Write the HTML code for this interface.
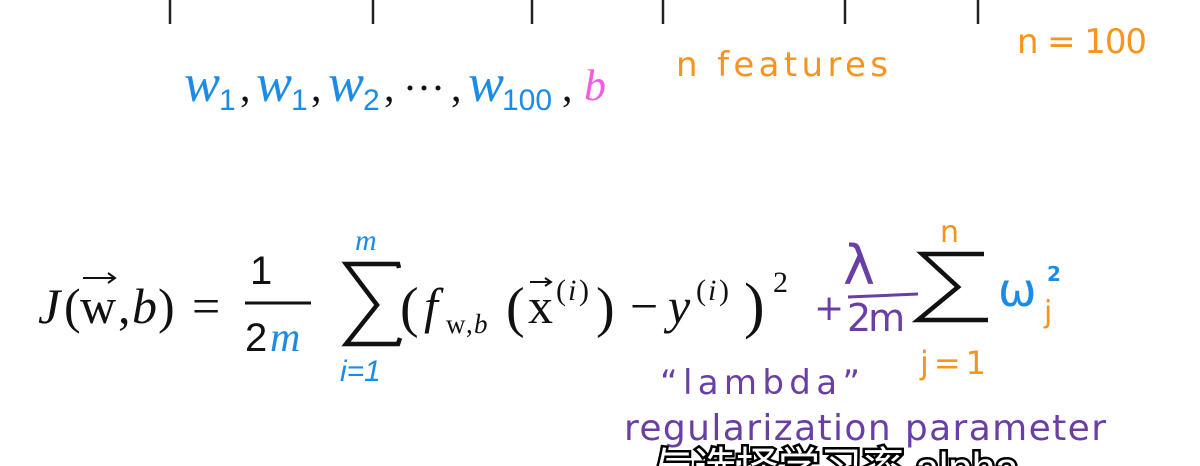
<!DOCTYPE html>
<html><head><meta charset="utf-8"><style>
html,body{margin:0;padding:0;background:#fff;width:1200px;height:466px;overflow:hidden}
svg{display:block}
.s{font-family:"Liberation Serif",serif}
.h{font-family:"DejaVu Sans","Liberation Sans",sans-serif}
</style></head><body>
<svg width="1200" height="466" viewBox="0 0 1200 466" xmlns="http://www.w3.org/2000/svg">
<g stroke="#222" stroke-width="2.5">
<line x1="170" y1="0" x2="170" y2="24"/><line x1="373" y1="0" x2="373" y2="24"/>
<line x1="532" y1="0" x2="532" y2="24"/><line x1="663" y1="0" x2="663" y2="24"/>
<line x1="845" y1="0" x2="845" y2="24"/><line x1="978" y1="0" x2="978" y2="24"/>
</g>
<g class="s" font-size="54" font-style="italic" fill="#1a8ce8">
<text x="184" y="101">w</text><text x="256" y="101">w</text><text x="328" y="101">w</text><text x="468" y="101">w</text>
</g>
<g font-family="Liberation Sans,sans-serif" font-size="30" fill="#1a8ce8">
<text x="219" y="110">1</text><text x="291" y="110">1</text><text x="363" y="110">2</text><text x="502" y="110">100</text>
</g>
<g class="s" font-size="42" fill="#111">
<text x="240" y="101">,</text><text x="311" y="101">,</text><text x="384" y="101">,</text><text x="451" y="101">,</text><text x="562" y="101">,</text>
</g>
<g fill="#111"><circle cx="410" cy="88" r="2.5"/><circle cx="424" cy="88" r="2.5"/><circle cx="438" cy="88" r="2.5"/></g>
<text x="584" y="100" class="s" font-size="44" font-style="italic" fill="#f25ce0">b</text>
<g class="h" fill="#f7941d" font-size="34">
<text x="676" y="76" textLength="212">n features</text>
<text x="1017" y="53" textLength="130">n = 100</text>
</g>
<g class="s" fill="#111" font-size="50">
<text x="38" y="323" font-style="italic">J</text>
<text x="64" y="323">(</text>
<text x="80" y="323">w</text>
<text x="118" y="323">,</text>
<text x="132" y="323" font-style="italic">b</text>
<text x="158" y="323">)</text>
<text x="192" y="323">=</text>
<text x="400" y="326" font-size="56">(</text>
<text x="424" y="323" font-style="italic">f</text>
<text x="506" y="326" font-size="56">(</text>
<text x="528" y="323">x</text>
<text x="596" y="326" font-size="56">)</text>
<text x="630" y="323">−</text>
<text x="668" y="323" font-style="italic">y</text>
<text x="744" y="326" font-size="62">)</text>
</g>
<path d="M83 278 H114 M108 273 L115 278 L108 283" stroke="#111" stroke-width="2" fill="none"/>
<path d="M530 282 H550 M545 278 L551 282 L545 286" stroke="#111" stroke-width="2" fill="none"/>
<text x="250" y="284" font-family="Liberation Sans,sans-serif" font-size="40" fill="#111">1</text>
<line x1="245" y1="303" x2="311" y2="303" stroke="#111" stroke-width="3"/>
<text x="245" y="351" font-family="Liberation Sans,sans-serif" font-size="40" fill="#111">2</text>
<text x="270" y="351" class="s" font-size="42" font-style="italic" fill="#1a8ce8">m</text>
<path d="M399 268 L398 264 H346 L377 305 L346 344 H398 L400 338" stroke="#111" stroke-width="4.5" fill="none"/>
<text x="355" y="250" class="s" font-size="30" font-style="italic" fill="#1a8ce8">m</text>
<text x="340" y="381" font-family="Liberation Sans,sans-serif" font-size="30" font-style="italic" fill="#1a8ce8">i=1</text>
<g class="s" fill="#111">
<text x="446" y="333" font-size="27">w</text><text x="466" y="333" font-size="27">,</text><text x="474" y="333" font-size="27" font-style="italic">b</text>
<text x="556" y="300" font-size="30">(</text><text x="568" y="300" font-size="30" font-style="italic">i</text><text x="579" y="300" font-size="30">)</text>
<text x="696" y="300" font-size="30">(</text><text x="708" y="300" font-size="30" font-style="italic">i</text><text x="719" y="300" font-size="30">)</text>
<text x="773" y="292" font-size="30">2</text>
</g>
<g fill="#6a3fa5" class="h">
<text x="814" y="320" font-size="36">+</text>
<text x="843" y="284" font-size="54">λ</text>
<text x="847" y="331" font-size="38" letter-spacing="-3">2m</text>
<text x="660" y="394" font-size="34" textLength="200">“lambda”</text>
<text x="624" y="440" font-size="36" textLength="482">regularization parameter</text>
</g>
<line x1="848" y1="297" x2="918" y2="294" stroke="#6a3fa5" stroke-width="3"/>
<path d="M984 254 H922 L958 287 L918 320 H988" stroke="#111" stroke-width="4.5" fill="none"/>
<g class="h" fill="#f7941d">
<text x="940" y="242" font-size="30">n</text>
<text x="1044" y="322" font-size="30">j</text>
<text x="920" y="374" font-size="32" textLength="66">j=1</text>
</g>
<text x="998" y="306" class="h" font-size="46" fill="#1a8ce8">ω</text>
<text x="1047" y="281" class="h" font-size="20" font-weight="bold" fill="#1a8ce8">2</text>
<text x="652" y="482" font-family="Liberation Sans,'Noto Sans CJK SC',sans-serif" font-size="42" fill="#fff" stroke="#000" stroke-width="5" paint-order="stroke">与选择学习率 alpha</text>
</svg>
</body></html>
